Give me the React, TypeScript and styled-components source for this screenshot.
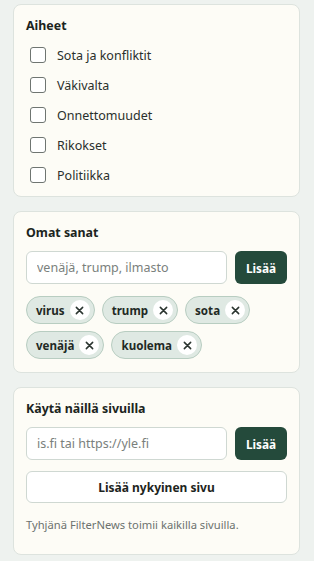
import React from "react";
import styled, { createGlobalStyle } from "styled-components";

const GlobalStyle = createGlobalStyle`
  body {
    margin: 0;
    background: #eef2ef;
    font-family: "Noto Sans", "Open Sans", sans-serif;
    color: #1d2420;
  }
`;

const Page = styled.div`
  display: flex;
  flex-direction: column;
  gap: 14px;
  padding: 4px 14px 8px 13px;
`;

const Card = styled.section<{ $bottom?: number }>`
  background: #fdfcf6;
  border: 1px solid #dde3de;
  border-radius: 8px;
  padding: 12px 12px ${(p) => p.$bottom ?? 13}px;
  display: flex;
  flex-direction: column;
`;

const Title = styled.h2`
  margin: 0;
  font-size: 12.4px;
  line-height: 18px;
  font-weight: 700;
  color: #1b2420;
`;

const CheckList = styled.div`
  margin-top: 5px;
  display: flex;
  flex-direction: column;
`;

const CheckRow = styled.label`
  display: flex;
  align-items: center;
  height: 30px;
  gap: 11px;
  padding-left: 4px;
  font-size: 12.5px;
  color: #2a302c;
`;

const Box = styled.input`
  appearance: none;
  margin: 0;
  width: 16px;
  height: 16px;
  border: 1px solid #6f7571;
  border-radius: 3px;
  background: #fff;
`;

const InputRow = styled.div`
  display: flex;
  gap: 8px;
  margin-top: 9px;
`;

const TextInput = styled.input`
  flex: 1;
  min-width: 0;
  height: 33px;
  box-sizing: border-box;
  border: 1px solid #cfd8d2;
  border-radius: 6px;
  background: #fff;
  padding: 0 10px;
  font-family: inherit;
  font-size: 12.5px;
  color: #1d2420;
  &::placeholder {
    color: #7a807c;
  }
`;

const DarkButton = styled.button`
  width: 52px;
  height: 33px;
  border: none;
  border-radius: 6px;
  background: #244a3b;
  color: #fff;
  font-family: inherit;
  font-size: 11.8px;
  font-weight: 700;
  padding: 0;
`;

const WideButton = styled.button`
  margin-top: 11px;
  height: 32px;
  border: 1px solid #cfd8d2;
  border-radius: 6px;
  background: #fff;
  color: #1d2420;
  font-family: inherit;
  font-size: 12px;
  font-weight: 700;
`;

const Chips = styled.div`
  display: flex;
  flex-wrap: wrap;
  gap: 7px;
  margin-top: 12px;
`;

const Chip = styled.span`
  display: inline-flex;
  align-items: center;
  gap: 5px;
  height: 28px;
  box-sizing: border-box;
  padding: 0 4px 0 9px;
  border: 1px solid #b8cdc1;
  border-radius: 14px;
  background: #dfe9e3;
  font-size: 11.6px;
  font-weight: 700;
  color: #1f2a25;
`;

const ChipClose = styled.span`
  width: 20px;
  height: 20px;
  border-radius: 50%;
  background: #fff;
  display: flex;
  align-items: center;
  justify-content: center;
`;

const Hint = styled.p`
  margin: 14px 0 8px;
  font-size: 11.2px;
  line-height: 16px;
  color: #6c726e;
`;

const topics = ["Sota ja konfliktit", "Väkivalta", "Onnettomuudet", "Rikokset", "Politiikka"];
const words = ["virus", "trump", "sota", "venäjä", "kuolema"];

const CloseIcon = () => (
  <svg width="9" height="9" viewBox="0 0 10 10">
    <path d="M1.5 1.5 L8.5 8.5 M8.5 1.5 L1.5 8.5" stroke="#2b3530" strokeWidth="1.7" strokeLinecap="round" />
  </svg>
);

export default function App() {
  return (
    <Page>
      <GlobalStyle />
      <Card $bottom={6}>
        <Title>Aiheet</Title>
        <CheckList>
          {topics.map((t) => (
            <CheckRow key={t}>
              <Box type="checkbox" />
              {t}
            </CheckRow>
          ))}
        </CheckList>
      </Card>
      <Card>
        <Title>Omat sanat</Title>
        <InputRow>
          <TextInput placeholder="venäjä, trump, ilmasto" />
          <DarkButton>Lisää</DarkButton>
        </InputRow>
        <Chips>
          {words.map((w) => (
            <Chip key={w}>
              {w}
              <ChipClose>
                <CloseIcon />
              </ChipClose>
            </Chip>
          ))}
        </Chips>
      </Card>
      <Card>
        <Title>Käytä näillä sivuilla</Title>
        <InputRow>
          <TextInput placeholder="is.fi tai https://yle.fi" />
          <DarkButton>Lisää</DarkButton>
        </InputRow>
        <WideButton>Lisää nykyinen sivu</WideButton>
        <Hint>Tyhjänä FilterNews toimii kaikilla sivuilla.</Hint>
      </Card>
    </Page>
  );
}
